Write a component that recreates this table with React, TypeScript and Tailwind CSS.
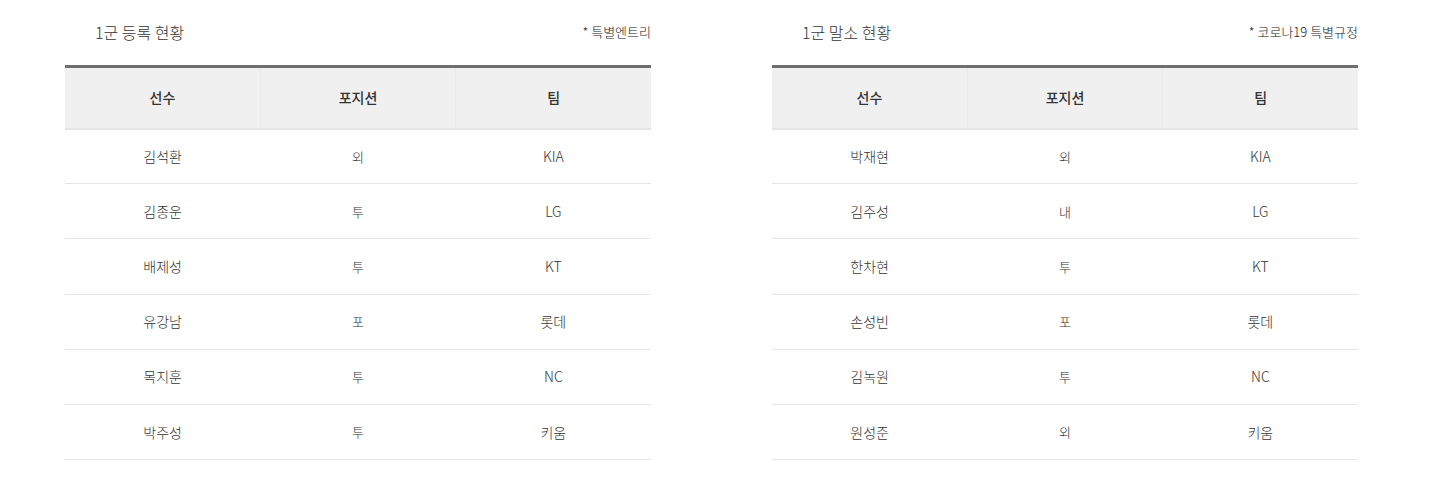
import React from 'react';

type Row = { name: string; pos: string; team: string };

const registered: Row[] = [
  { name: '김석환', pos: '외', team: 'KIA' },
  { name: '김종운', pos: '투', team: 'LG' },
  { name: '배제성', pos: '투', team: 'KT' },
  { name: '유강남', pos: '포', team: '롯데' },
  { name: '목지훈', pos: '투', team: 'NC' },
  { name: '박주성', pos: '투', team: '키움' },
];

const released: Row[] = [
  { name: '박재현', pos: '외', team: 'KIA' },
  { name: '김주성', pos: '내', team: 'LG' },
  { name: '한차현', pos: '투', team: 'KT' },
  { name: '손성빈', pos: '포', team: '롯데' },
  { name: '김녹원', pos: '투', team: 'NC' },
  { name: '원성준', pos: '외', team: '키움' },
];

const RosterTable: React.FC<{ title: string; note: string; rows: Row[] }> = ({ title, note, rows }) => {
  return (
    <div className="w-[586px]">
      <div className="flex items-center justify-between h-[24px] mt-[20px] mb-[21px]">
        <h3 className="pl-[30px] text-[16px] font-light text-[#333]">{title}</h3>
        <span className="text-[13px] font-light text-[#222]">{note}</span>
      </div>
      <table className="w-full table-fixed text-center border-t-[3px] border-[#6f6f6f]">
        <thead>
          <tr className="bg-[#f0f0f0] border-b-2 border-[#e4e4e4] h-[62px]">
            <th className="font-medium text-[14px] text-[#333] border-r border-[#ebebeb]">선수</th>
            <th className="font-medium text-[14px] text-[#333] border-r border-[#ebebeb]">포지션</th>
            <th className="font-medium text-[14px] text-[#333]">팀</th>
          </tr>
        </thead>
        <tbody>
          {rows.map(r => (
            <tr key={r.name} className="h-[55.2px] border-b-[1.5px] border-[#e6e6e6]">
              <td className="text-[14px] font-light text-[#333]">{r.name}</td>
              <td className="text-[13px] font-light text-[#333]">{r.pos}</td>
              <td className="text-[14px] font-light text-[#333]">{r.team}</td>
            </tr>
          ))}
        </tbody>
      </table>
    </div>
  );
};

export default function App() {
  return (
    <div
      className="w-[1440px] h-[494px] bg-white flex gap-[121px] pl-[65px]"
      style={{ fontFamily: '"Noto Sans CJK KR", "Noto Sans", sans-serif' }}
    >
      <RosterTable title="1군 등록 현황" note="* 특별엔트리" rows={registered} />
      <RosterTable title="1군 말소 현황" note="* 코로나19 특별규정" rows={released} />
    </div>
  );
}
